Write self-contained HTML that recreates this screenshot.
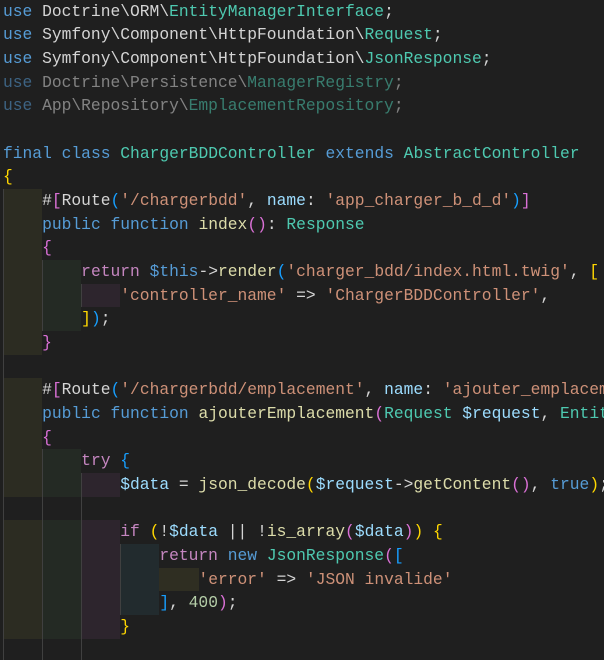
<!DOCTYPE html>
<html><head><meta charset="utf-8"><style>
html,body{margin:0;padding:0;background:#1f1f1f;width:604px;height:660px;overflow:hidden}
#w{position:relative;width:604px;height:660px;overflow:hidden;font-family:"Liberation Mono",monospace;font-size:16.3px}
.l{position:absolute;left:3px;right:0;overflow:hidden;height:23.67px;line-height:23.67px;white-space:pre;color:#d4d4d4}
.b{position:absolute;height:23.67px}
.g{position:absolute;width:1px;background:#404040}
.k{color:#569cd6}.c{color:#4ec9b0}.s{color:#ce9178}.f{color:#dcdcaa}.v{color:#9cdcfe}.p{color:#c586c0}.n{color:#b5cea8}
.y{color:#ffd700}.o{color:#da70d6}.u{color:#179fff}.d{opacity:.55}
</style></head><body><div id="w">
<div id="bg"></div>
<script>
var lh=23.67,top0=-0.4,cw=9.78;
var cols=['#2c2c22','#242a24','#2d252d','#222b2e','#2f2e22'];
var spans={0:[[8,14],[16,20],[22,26]],1:[[11,13],[19,20],[22,26]],2:[[12,12],[20,20],[22,26]],3:[[23,25]],4:[[24,24]]};
var h='';
for(var lv in spans){spans[lv].forEach(function(r){h+='<div class="b" style="left:'+(3+lv*4*cw)+'px;width:'+(4*cw)+'px;top:'+(top0+r[0]*lh)+'px;height:'+((r[1]-r[0]+1)*lh)+'px;background:'+cols[lv]+'"></div>';});}
var gs=[[0,8,28],[1,11,13],[1,19,28],[2,12,12],[2,20,28],[3,23,25]];
gs.forEach(function(g){h+='<div class="g" style="left:'+(3+g[0]*4*cw)+'px;top:'+(top0+g[1]*lh)+'px;height:'+((g[2]-g[1]+1)*lh)+'px"></div>';});
document.getElementById('bg').innerHTML=h;
</script>
<div class="l" style="top:-0.4px"><span class="k">use</span> Doctrine\ORM\<span class="c">EntityManagerInterface</span>;</div>
<div class="l" style="top:23.27px"><span class="k">use</span> Symfony\Component\HttpFoundation\<span class="c">Request</span>;</div>
<div class="l" style="top:46.94px"><span class="k">use</span> Symfony\Component\HttpFoundation\<span class="c">JsonResponse</span>;</div>
<div class="l d" style="top:70.61px"><span class="k">use</span> Doctrine\Persistence\<span class="c">ManagerRegistry</span>;</div>
<div class="l d" style="top:94.28px"><span class="k">use</span> App\Repository\<span class="c">EmplacementRepository</span>;</div>
<div class="l" style="top:141.62px"><span class="k">final</span> <span class="k">class</span> <span class="c">ChargerBDDController</span> <span class="k">extends</span> <span class="c">AbstractController</span></div>
<div class="l" style="top:165.29px"><span class="y">{</span></div>
<div class="l" style="top:188.96px">    #<span class="o">[</span>Route<span class="u">(</span><span class="s">'/chargerbdd'</span>, <span class="v">name</span>: <span class="s">'app_charger_b_d_d'</span><span class="u">)</span><span class="o">]</span></div>
<div class="l" style="top:212.63px">    <span class="k">public</span> <span class="k">function</span> <span class="f">index</span><span class="o">()</span>: <span class="c">Response</span></div>
<div class="l" style="top:236.3px">    <span class="o">{</span></div>
<div class="l" style="top:259.97px">        <span class="p">return</span> <span class="k">$this</span>-&gt;<span class="f">render</span><span class="u">(</span><span class="s">'charger_bdd/index.html.twig'</span>, <span class="y">[</span></div>
<div class="l" style="top:283.64px">            <span class="s">'controller_name'</span> =&gt; <span class="s">'ChargerBDDController'</span>,</div>
<div class="l" style="top:307.31px">        <span class="y">]</span><span class="u">)</span>;</div>
<div class="l" style="top:330.98px">    <span class="o">}</span></div>
<div class="l" style="top:378.32px">    #<span class="o">[</span>Route<span class="u">(</span><span class="s">'/chargerbdd/emplacement'</span>, <span class="v">name</span>: <span class="s">'ajouter_emplacement'</span></div>
<div class="l" style="top:401.99px">    <span class="k">public</span> <span class="k">function</span> <span class="f">ajouterEmplacement</span><span class="o">(</span><span class="c">Request</span> <span class="v">$request</span>, <span class="c">EntityManagerInterface</span></div>
<div class="l" style="top:425.66px">    <span class="o">{</span></div>
<div class="l" style="top:449.33px">        <span class="p">try</span> <span class="u">{</span></div>
<div class="l" style="top:473px">            <span class="v">$data</span> = <span class="f">json_decode</span><span class="y">(</span><span class="v">$request</span>-&gt;<span class="f">getContent</span><span class="o">()</span>, <span class="k">true</span><span class="y">)</span>;</div>
<div class="l" style="top:520.34px">            <span class="p">if</span> <span class="y">(</span>!<span class="v">$data</span> || !<span class="f">is_array</span><span class="o">(</span><span class="v">$data</span><span class="o">)</span><span class="y">)</span> <span class="y">{</span></div>
<div class="l" style="top:544.01px">                <span class="p">return</span> <span class="k">new</span> <span class="c">JsonResponse</span><span class="o">(</span><span class="u">[</span></div>
<div class="l" style="top:567.68px">                    <span class="s">'error'</span> =&gt; <span class="s">'JSON invalide'</span></div>
<div class="l" style="top:591.35px">                <span class="u">]</span>, <span class="n">400</span><span class="o">)</span>;</div>
<div class="l" style="top:615.02px">            <span class="y">}</span></div>
</div></body></html>
